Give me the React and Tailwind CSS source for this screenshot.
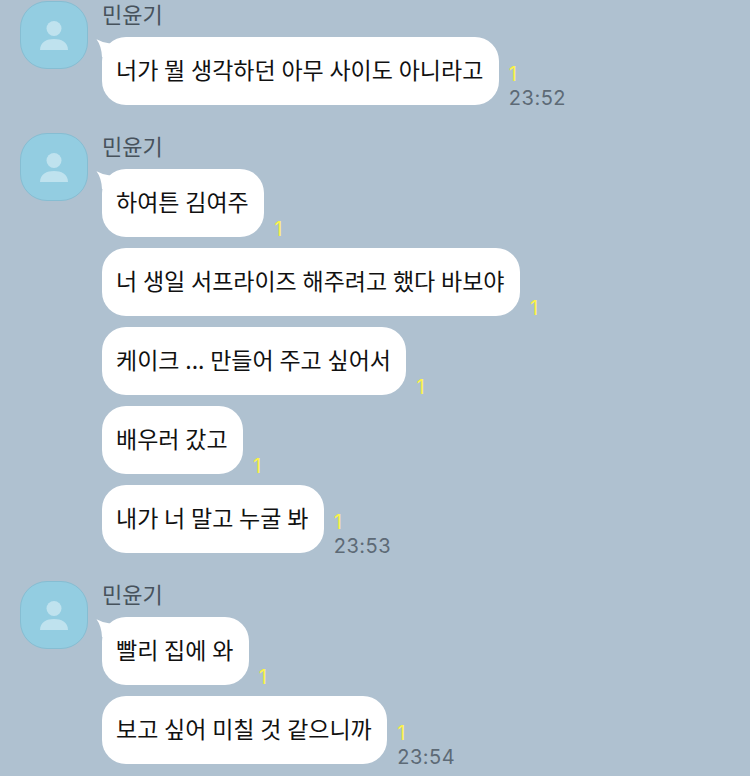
import React from "react";

const groups = [
  {
    messages: [{ text: "너가 뭘 생각하던 아무 사이도 아니라고", time: "23:52" }],
  },
  {
    messages: [
      { text: "하여튼 김여주" },
      { text: "너 생일 서프라이즈 해주려고 했다 바보야" },
      { text: "케이크 ... 만들어 주고 싶어서" },
      { text: "배우러 갔고" },
      { text: "내가 너 말고 누굴 봐", time: "23:53" },
    ],
  },
  {
    messages: [
      { text: "빨리 집에 와" },
      { text: "보고 싶어 미칠 것 같으니까", time: "23:54" },
    ],
  },
];

const Avatar = () => (
  <div className="w-[68px] h-[68px] shrink-0 rounded-[27px] bg-[#93cde1] border border-[#86bdd2] flex items-center justify-center">
    <svg width="30" height="32" viewBox="0 0 30 32" className="mt-[2px]">
      <circle cx="15" cy="8.5" r="7.5" fill="#bfe2ee" />
      <path d="M1 30 C1 22 8 19 15 19 C22 19 29 22 29 30 Z" fill="#bfe2ee" />
    </svg>
  </div>
);

const Bubble = ({ text, time, first }) => (
  <div className="flex items-end">
    <div className="relative h-[68px] rounded-[24px] bg-white pl-[14px] pr-[15.5px] pb-[3px] flex items-center text-[23px] [word-spacing:0.6px] text-[#111] whitespace-nowrap">
      {first && (
        <svg width="20" height="24" viewBox="0 0 20 24" className="absolute left-[-6px] top-0">
          <path d="M0.5 2.3 Q7 6 14 6.5 L20 6.5 L20 20 L6 20 Q5.5 9 0.5 2.3 Z" fill="#fff" />
        </svg>
      )}
      {text}
    </div>
    <div className={`ml-[10px] flex flex-col ${time ? "" : "mb-[-4px]"}`}>
      <span className="text-[#fbf24a] text-[20px] leading-[24px] font-['Inter',sans-serif]">1</span>
      {time && (
        <span className="text-[#5d6a76] text-[20px] leading-[24px] tracking-[0.5px] mb-[-5px] font-['Inter',sans-serif]">{time}</span>
      )}
    </div>
  </div>
);

export default function App() {
  return (
    <div className="w-[750px] h-[776px] overflow-hidden bg-[#afc1d0] pt-[1px] pl-[20px] flex flex-col gap-[28px] font-['Noto_Sans_CJK_KR','Noto_Sans_CJK_JP',sans-serif]">
      {groups.map((g, i) => (
        <div key={i} className="flex gap-[14px]">
          <Avatar />
          <div className="flex flex-col">
            <div className="h-[36px] text-[22px] leading-[25px] text-[#47525c]">민윤기</div>
            <div className="flex flex-col gap-[11px]">
              {g.messages.map((m, j) => (
                <Bubble key={j} text={m.text} time={m.time} first={j === 0} />
              ))}
            </div>
          </div>
        </div>
      ))}
    </div>
  );
}
